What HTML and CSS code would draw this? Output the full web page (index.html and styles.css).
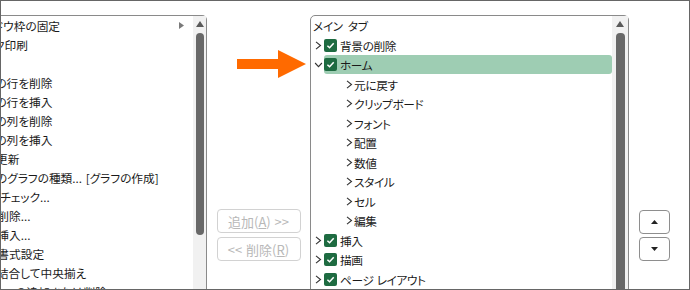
FILE: index.html
```
<!DOCTYPE html>
<html>
<head>
	<meta charset="utf-8">
	<title>リボンのユーザー設定</title>
	<link rel="stylesheet" href="styles.css">
</head>
<body>
<div class="frame">
	<div class="listbox commands">
		<ul class="items">
			<li><span class="txt">ウィンドウ枠の固定</span><svg class="submenu" width="5" height="7" viewBox="0 0 5 7"><path d="M0 0 L5 3.5 L0 7 Z" fill="#7a7a7a"/></svg></li>
			<li><span class="txt">クイック印刷</span></li>
			<li><span class="txt">コピー</span></li>
			<li><span class="txt">シートの行を削除</span></li>
			<li><span class="txt">シートの行を挿入</span></li>
			<li><span class="txt">シートの列を削除</span></li>
			<li><span class="txt">シートの列を挿入</span></li>
			<li><span class="txt">すべて更新</span></li>
			<li><span class="txt">すべてのグラフの種類... [グラフの作成]</span></li>
			<li><span class="txt">スペル チェック...</span></li>
			<li><span class="txt">セルの削除...</span></li>
			<li><span class="txt">セルの挿入...</span></li>
			<li><span class="txt">セルの書式設定</span></li>
			<li><span class="txt">セルを結合して中央揃え</span></li>
			<li><span class="txt">フィルターの追加または削除</span></li>
		</ul>
		<div class="scrollbar">
			<svg class="scroll_up" width="8" height="6" viewBox="0 0 8 6"><path d="M4 0 L8 6 L0 6 Z" fill="#5a5a5a"/></svg>
			<div class="thumb short"></div>
		</div>
	</div>

	<div class="middle">
		<button class="move" disabled>追加(<u>A</u>) &gt;&gt;</button>
		<button class="move" disabled>&lt;&lt; 削除(<u>R</u>)</button>
	</div>

	<div class="listbox tabs">
		<ul class="tree">
			<li class="heading">メイン タブ</li>
			<li class="node">
				<svg class="twisty" width="7" height="9" viewBox="0 0 7 9"><polyline points="1,0.8 5.5,4.5 1,8.2" fill="none" stroke="#333" stroke-width="1.1"/></svg>
				<span class="label"><svg class="check" width="13" height="13" viewBox="0 0 13 13"><rect width="13" height="13" rx="2" fill="#1e6b41"/><polyline points="3.4,6.7 5.6,8.8 9.7,4.3" fill="none" stroke="#fff" stroke-width="1.5"/></svg>背景の削除</span>
			</li>
			<li class="node">
				<svg class="twisty" width="8" height="6" viewBox="0 0 8 6"><polyline points="0.6,1 4,4.6 7.4,1" fill="none" stroke="#333" stroke-width="1.1"/></svg>
				<span class="label selected"><svg class="check" width="13" height="13" viewBox="0 0 13 13"><rect width="13" height="13" rx="2" fill="#1e6b41"/><polyline points="3.4,6.7 5.6,8.8 9.7,4.3" fill="none" stroke="#fff" stroke-width="1.5"/></svg>ホーム</span>
			</li>
			<li class="node child"><svg class="twisty" width="7" height="9" viewBox="0 0 7 9"><polyline points="1,0.8 5.5,4.5 1,8.2" fill="none" stroke="#333" stroke-width="1.1"/></svg><span class="label">元に戻す</span></li>
			<li class="node child"><svg class="twisty" width="7" height="9" viewBox="0 0 7 9"><polyline points="1,0.8 5.5,4.5 1,8.2" fill="none" stroke="#333" stroke-width="1.1"/></svg><span class="label">クリップボード</span></li>
			<li class="node child"><svg class="twisty" width="7" height="9" viewBox="0 0 7 9"><polyline points="1,0.8 5.5,4.5 1,8.2" fill="none" stroke="#333" stroke-width="1.1"/></svg><span class="label">フォント</span></li>
			<li class="node child"><svg class="twisty" width="7" height="9" viewBox="0 0 7 9"><polyline points="1,0.8 5.5,4.5 1,8.2" fill="none" stroke="#333" stroke-width="1.1"/></svg><span class="label">配置</span></li>
			<li class="node child"><svg class="twisty" width="7" height="9" viewBox="0 0 7 9"><polyline points="1,0.8 5.5,4.5 1,8.2" fill="none" stroke="#333" stroke-width="1.1"/></svg><span class="label">数値</span></li>
			<li class="node child"><svg class="twisty" width="7" height="9" viewBox="0 0 7 9"><polyline points="1,0.8 5.5,4.5 1,8.2" fill="none" stroke="#333" stroke-width="1.1"/></svg><span class="label">スタイル</span></li>
			<li class="node child"><svg class="twisty" width="7" height="9" viewBox="0 0 7 9"><polyline points="1,0.8 5.5,4.5 1,8.2" fill="none" stroke="#333" stroke-width="1.1"/></svg><span class="label">セル</span></li>
			<li class="node child"><svg class="twisty" width="7" height="9" viewBox="0 0 7 9"><polyline points="1,0.8 5.5,4.5 1,8.2" fill="none" stroke="#333" stroke-width="1.1"/></svg><span class="label">編集</span></li>
			<li class="node">
				<svg class="twisty" width="7" height="9" viewBox="0 0 7 9"><polyline points="1,0.8 5.5,4.5 1,8.2" fill="none" stroke="#333" stroke-width="1.1"/></svg>
				<span class="label"><svg class="check" width="13" height="13" viewBox="0 0 13 13"><rect width="13" height="13" rx="2" fill="#1e6b41"/><polyline points="3.4,6.7 5.6,8.8 9.7,4.3" fill="none" stroke="#fff" stroke-width="1.5"/></svg>挿入</span>
			</li>
			<li class="node">
				<svg class="twisty" width="7" height="9" viewBox="0 0 7 9"><polyline points="1,0.8 5.5,4.5 1,8.2" fill="none" stroke="#333" stroke-width="1.1"/></svg>
				<span class="label"><svg class="check" width="13" height="13" viewBox="0 0 13 13"><rect width="13" height="13" rx="2" fill="#1e6b41"/><polyline points="3.4,6.7 5.6,8.8 9.7,4.3" fill="none" stroke="#fff" stroke-width="1.5"/></svg>描画</span>
			</li>
			<li class="node">
				<svg class="twisty" width="7" height="9" viewBox="0 0 7 9"><polyline points="1,0.8 5.5,4.5 1,8.2" fill="none" stroke="#333" stroke-width="1.1"/></svg>
				<span class="label"><svg class="check" width="13" height="13" viewBox="0 0 13 13"><rect width="13" height="13" rx="2" fill="#1e6b41"/><polyline points="3.4,6.7 5.6,8.8 9.7,4.3" fill="none" stroke="#fff" stroke-width="1.5"/></svg>ページ レイアウト</span>
			</li>
		</ul>
		<div class="scrollbar wide">
			<svg class="scroll_up" width="8" height="6" viewBox="0 0 8 6"><path d="M4 0 L8 6 L0 6 Z" fill="#5a5a5a"/></svg>
			<div class="thumb"></div>
		</div>
	</div>

	<div class="order">
		<button class="updown"><svg width="7" height="4" viewBox="0 0 7 4"><path d="M3.5 0 L7 4 L0 4 Z" fill="#222"/></svg></button>
		<button class="updown"><svg width="7" height="4" viewBox="0 0 7 4"><path d="M0 0 L7 0 L3.5 4 Z" fill="#222"/></svg></button>
	</div>

	<!-- annotation pointing at the selected tab -->
	<svg class="pointer" width="70" height="28" viewBox="0 0 70 28"><path d="M0 9 L41 9 L41 0 L69 14 L41 28 L41 19 L0 19 Z" fill="#ff6a00"/></svg>
</div>
</body>
</html>
```

FILE: styles.css
```
body {
	margin: 0;
	font-family: "Noto Sans CJK JP", sans-serif;
	font-size: 11.7px;
	color: #1a1a1a;
	font-feature-settings: "palt";
	word-spacing: 1px;
}
ul {
	list-style: none;
	margin: 0;
	padding: 0;
}
.frame {
	position: relative;
	display: flex;
	width: 690px;
	height: 290px;
	box-sizing: border-box;
	border: 1px solid #666;
	background: #fff;
	overflow: hidden;
}
.listbox {
	display: flex;
	flex: none;
	box-sizing: border-box;
	height: 300px;
	margin-top: 14px;
	border: 1px solid #8a8a8a;
	background: #fff;
}
.commands {
	width: 206px;
	border-left: none;
	border-top-right-radius: 5px;
}
.tabs {
	width: 319px;
	border-top-left-radius: 5px;
	border-top-right-radius: 5px;
}
.items {
	flex: 1;
	min-width: 0;
	overflow: hidden;
}
.items li {
	display: flex;
	align-items: center;
	height: 19px;
	white-space: nowrap;
}
.items .txt {
	margin-left: -37px;
}
.submenu {
	margin-left: auto;
	margin-right: 9px;
	flex: none;
}
.scrollbar {
	display: flex;
	flex-direction: column;
	align-items: center;
	width: 13px;
	flex: none;
	background: #f1f1f1;
}
.scrollbar.wide {
	width: 16px;
}
.scroll_up {
	margin-top: 5px;
}
.thumb {
	width: 8px;
	height: 260px;
	margin-top: 6px;
	border-radius: 4px;
	background: #686868;
}
.thumb.short {
	height: 202px;
}
.wide .thumb {
	width: 9px;
}
.middle {
	display: flex;
	flex-direction: column;
	align-items: center;
	gap: 4px;
	width: 103px;
	flex: none;
	padding-top: 208px;
	box-sizing: border-box;
}
.move {
	width: 84px;
	height: 24px;
	padding: 0;
	font-family: inherit;
	font-size: 13px;
	color: #b8b8b8;
	background: #fff;
	border: 1px solid #d2d2d2;
	border-radius: 4px;
	font-feature-settings: "palt";
	word-spacing: 1px;
}
.tree {
	flex: 1;
	min-width: 0;
	overflow: hidden;
	padding-left: 2px;
	letter-spacing: -0.4px;
}
.tree li {
	display: flex;
	align-items: center;
	height: 19.5px;
	white-space: nowrap;
}
.tree .heading {
	word-spacing: 3px;
}
.twisty {
	flex: none;
	width: 11px;
}
.label {
	display: flex;
	align-items: center;
	gap: 3px;
	flex: 1;
	height: 19px;
}
.label.selected {
	background: #9ecdb3;
	border-radius: 3px;
}
.check {
	flex: none;
}
.tree .child {
	padding-left: 32px;
}
.child .twisty {
	width: 9px;
}
.order {
	display: flex;
	flex-direction: column;
	gap: 3px;
	padding-top: 209px;
	padding-left: 10px;
}
.updown {
	display: flex;
	align-items: center;
	justify-content: center;
	width: 31px;
	height: 24px;
	padding: 0;
	background: #fff;
	border: 1px solid #8e8e8e;
	border-radius: 4px;
}
.pointer {
	position: absolute;
	left: 236px;
	top: 49px;
}
```
